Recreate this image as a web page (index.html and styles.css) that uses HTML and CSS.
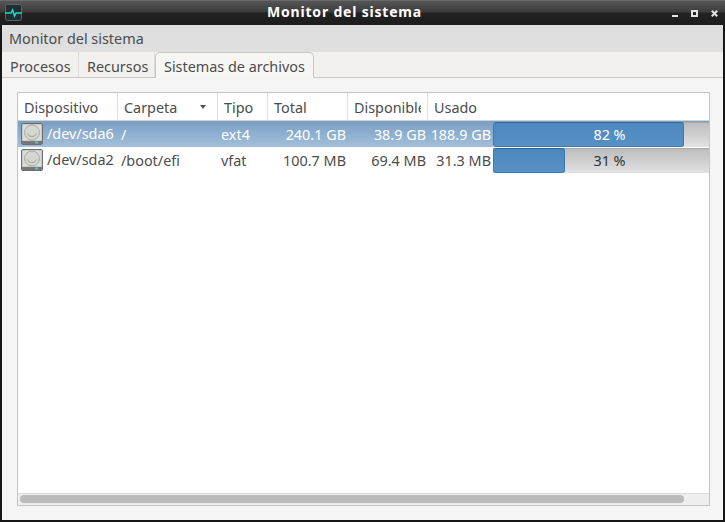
FILE: index.html
```html
<!DOCTYPE html>
<html lang="en">
<head>
<meta charset="UTF-8">
<meta name="viewport" content="width=device-width, initial-scale=1.0">
<title>Monitor del sistema</title>
<link rel="stylesheet" href="styles.css">
</head>
<body>

<svg class="defs" width="0" height="0">
  <symbol id="disk" viewBox="0 0 22 22">
    <rect x="0.5" y="0.5" width="21" height="21" rx="1.500" fill="#b9b9b6" stroke="#6e6e6c"/>
    <rect x="1.500" y="1.500" width="19" height="16" fill="#dcdcd9"/>
    <circle cx="11" cy="9.500" r="7.500" fill="#d6d6d3" stroke="#a9a9a6"/>
    <path d="M6.500 10.500a4.800 4.800 0 0 0 9 0" fill="none" stroke="#a3a3a0"/>
    <rect x="1" y="18" width="20" height="3" fill="#77777a"/>
    <rect x="14" y="18.500" width="3" height="2" fill="#35d0e0"/>
  </symbol>
</svg>

<div class="window">
  <div class="titlebar">
    <svg class="app-icon" width="17" height="17" viewBox="0 0 17 17">
      <rect x="0.5" y="0.5" width="16" height="16" rx="2" fill="#1f2e2e" stroke="#5a6262"/>
      <path d="M0 9h6l1.500-3 2 6 1.500-3H17" fill="none" stroke="#22d8d0" stroke-width="1.500"/>
    </svg>
    <span class="title">Monitor del sistema</span>
    <div class="win-buttons">
      <span class="btn-min"></span>
      <span class="btn-max"></span>
      <svg width="7" height="7" viewBox="0 0 7 7"><path d="M.8.8l5.400 5.400M6.200.8L.8 6.200" stroke="#e4e4e4" stroke-width="2"/></svg>
    </div>
  </div>

  <div class="menubar">Monitor del sistema</div>

  <div class="tabs">
    <div class="tab">Procesos</div>
    <div class="tab">Recursos</div>
    <div class="tab active">Sistemas de archivos</div>
  </div>

  <div class="content">
    <div class="tree">
      <div class="row header">
        <div class="col">Dispositivo</div>
        <div class="col sorted">Carpeta <span class="arrow"></span></div>
        <div class="col">Tipo</div>
        <div class="col">Total</div>
        <div class="col clip"><span>Disponible</span></div>
        <div class="col">Usado</div>
      </div>
      <div id="rows" class="rows"></div>
      <div class="scrollbar"><div class="thumb"></div></div>
    </div>
  </div>
</div>

<script>
const disks = [
  { dev: '/dev/sda6', dir: '/', type: 'ext4', total: '240.1 GB', free: '38.9 GB', used: '188.9 GB', pct: 82 },
  { dev: '/dev/sda2', dir: '/boot/efi', type: 'vfat', total: '100.7 MB', free: '69.4 MB', used: '31.3 MB', pct: 31 }
];

let rowsHTML = '';
disks.forEach((d, i) => {
  rowsHTML += `<div class="row disk ${i === 0 ? 'selected' : ''}">
    <div class="cell dev"><svg class="disk-icon" width="22" height="22"><use href="#disk"/></svg>${d.dev}</div>
    <div class="cell">${d.dir}</div>
    <div class="cell">${d.type}</div>
    <div class="cell num">${d.total}</div>
    <div class="cell num">${d.free}</div>
    <div class="cell num used">${d.used}</div>
    <div class="trough"><div class="fill" style="width: ${d.pct}%"></div><span class="pct">${d.pct} %</span></div>
  </div>`;
});
document.getElementById('rows').innerHTML = rowsHTML;
</script>

</body>
</html>
```
FILE: styles.css
```css
* {
  box-sizing: border-box;
}

html, body {
  margin: 0;
  padding: 0;
  height: 100%;
  overflow: hidden;
  background: #171717;
}

body {
  font-family: "Noto Sans", "Open Sans", sans-serif;
  font-size: 14.4px;
  color: #4c4c4c;
}

.defs {
  display: block;
  height: 0;
}

.window {
  height: 522px;
  display: flex;
  flex-direction: column;
  padding: 0 2px 2px;
  border-top: 1px solid #6a6a6a;
}

.titlebar {
  height: 24px;
  margin: 0 -2px;
  padding: 3px 6px 0 5px;
  flex: none;
  display: flex;
  align-items: flex-start;
  background: linear-gradient(#555 0, #3c3c3c 11px, #232323 12px, #1c1c1c 24px);
}

.app-icon {
  flex: none;
}

.title {
  flex: 1;
  padding-right: 5px;
  margin-top: -2px;
  text-align: center;
  color: #fff;
  font-size: 14px;
  font-weight: bold;
  letter-spacing: 0.8px;
  line-height: 20px;
}

.win-buttons {
  display: flex;
  align-items: center;
  gap: 13px;
  height: 18px;
  margin-right: 1px;
}

.btn-min {
  width: 6px;
  height: 2px;
  margin-top: 6px;
  background: #e4e4e4;
}

.btn-max {
  width: 7px;
  height: 7px;
  border: 2px solid #e4e4e4;
}

.menubar {
  flex: none;
  height: 27px;
  padding-left: 7px;
  line-height: 27px;
  background: #dfdfdf;
}

.tabs {
  flex: none;
  height: 26px;
  display: flex;
  background: #f2f1f0;
  border-bottom: 1px solid #c8c8c6;
}

.tab {
  padding: 0 8px;
  line-height: 29px;
  border-right: 1px solid #dcdcda;
}

.tab:first-child {
  padding: 0 6px 0 8px;
  width: 77px;
}

.tab:nth-child(2) {
  width: 76px;
}

.tab.active {
  height: 27px;
  padding: 0 8px;
  line-height: 27px;
  background: #f6f6f5;
  border: 1px solid #c8c8c6;
  border-bottom: none;
  border-radius: 5px 5px 0 0;
}

.content {
  flex: 1;
  min-height: 0;
  padding: 14px 13px 14px 15px;
  background: #f5f5f5;
}

.tree {
  height: 100%;
  display: flex;
  flex-direction: column;
  overflow: hidden;
  background: #fff;
  border: 1px solid #c4c4c4;
}

.row {
  display: grid;
  grid-template-columns: 100px 100px 50px 80px 80px 65px 233px;
  width: 708px;
  flex: none;
}

.header {
  height: 28px;
  border-bottom: 1px solid #d2d2d2;
  grid-template-columns: 100px 100px 50px 80px 80px 298px;
}

.col {
  padding-left: 6px;
  line-height: 29px;
  border-right: 1px solid #dfdfdf;
  white-space: nowrap;
  overflow: hidden;
}

.col:last-child {
  border-right: none;
}

.sorted {
  position: relative;
}

.arrow {
  position: absolute;
  right: 11px;
  top: 12px;
  border: 3px solid transparent;
  border-top: 4px solid #555;
  border-bottom: none;
}

.clip span {
  display: block;
  width: 67px;
  overflow: hidden;
}

.rows {
  flex: 1;
  min-height: 0;
}

.disk {
  height: 26px;
  line-height: 28px;
  white-space: nowrap;
}

.disk.selected {
  color: #fff;
  background: linear-gradient(#7a9fc5, #a3bfda);
}

.cell {
  padding-left: 3px;
  overflow: hidden;
}

.cell.dev {
  display: flex;
  align-items: center;
  gap: 4px;
  padding-left: 3px;
}

.disk-icon {
  flex: none;
}

.num {
  text-align: right;
  padding: 0 2px 0 0;
}

.used {
  padding-right: 2px;
}

.trough {
  position: relative;
  height: 25px;
  margin-top: 1px;
  text-align: center;
  line-height: 23px;
  color: #333;
  background: linear-gradient(#bdbdbd, #e2e2e2);
  border-top: 1px solid #a8a8a8;
}

.fill {
  position: absolute;
  left: 0;
  top: -1px;
  bottom: 0;
  background: linear-gradient(#4c88bf, #5791c5);
  border: 1px solid #3f78ad;
  border-top-color: #2f68a0;
  border-radius: 3px;
}

.pct {
  position: relative;
}

.selected .pct {
  color: #fff;
}

.scrollbar {
  flex: none;
  height: 12px;
  padding: 1px 25px 2px 2px;
  background: #eeeeee;
  border-top: 1px solid #dcdcdc;
}

.thumb {
  height: 8px;
  border-radius: 4px;
  background: #bbbbbb;
}
```
